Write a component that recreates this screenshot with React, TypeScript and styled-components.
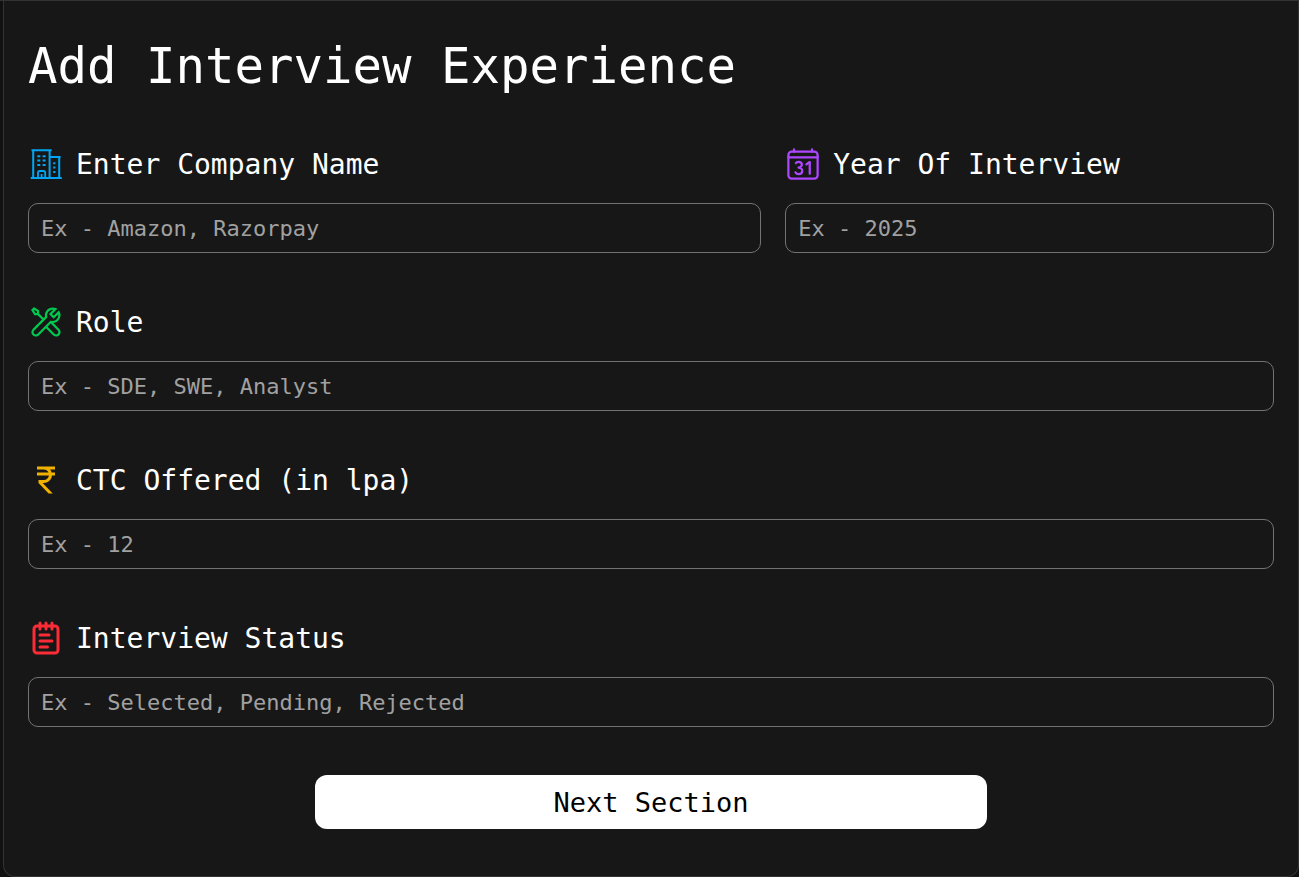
import React from "react";
import styled, { createGlobalStyle } from "styled-components";
import { IoCalendarNumberOutline } from "react-icons/io5";
import { LiaToolsSolid } from "react-icons/lia";
import { MdCurrencyRupee } from "react-icons/md";
import { LuNotepadText } from "react-icons/lu";

const GlobalStyle = createGlobalStyle`
  *, *::before, *::after { box-sizing: border-box; }
  body {
    margin: 0;
    background: #111111;
    color: #ffffff;
    font-family: Consolas, "DejaVu Sans Mono", monospace;
  }
`;

const Page = styled.main`
  border-top: 1px solid #333333;
  padding-left: 3px;
`;

const Card = styled.form`
  padding: 24px 24px 47px;
  background: #171717;
  border: 1px solid #333333;
  border-top: 0;
  border-radius: 0 0 12px 12px;
`;

const Title = styled.h1`
  margin: 0 0 36px;
  font-size: 49px;
  line-height: 84px;
  font-weight: 400;
`;

const Fields = styled.div`
  display: grid;
  grid-template-columns: 3fr 2fr;
  column-gap: 24px;
  row-gap: 50px;
`;

const Field = styled.div<{ $wide?: boolean }>`
  display: flex;
  flex-direction: column;
  gap: 20px;
  min-width: 0;
  grid-column: ${(p) => (p.$wide ? "1 / -1" : "auto")};
`;

const Label = styled.label<{ $tint: string }>`
  display: flex;
  align-items: center;
  gap: 12px;
  font-size: 28px;

  svg {
    flex: none;
    width: 36px;
    height: 36px;
    color: ${(p) => p.$tint};
  }
`;

const LabelText = styled.span`
  padding-top: 2px;
  line-height: 36px;
`;

const TextInput = styled.input`
  width: 100%;
  height: 50px;
  padding: 0 12px;
  border: 1px solid #737373;
  border-radius: 10px;
  background: transparent;
  color: inherit;
  font: inherit;
  font-size: 22px;

  &::placeholder { color: #a1a1a1; opacity: 1; }
`;

const NextButton = styled.button`
  display: block;
  width: 100%;
  max-width: 672px;
  height: 54px;
  margin: 48px auto 0;
  border: 0;
  border-radius: 12px;
  background: #ffffff;
  color: #000000;
  font: inherit;
  font-size: 27px;
  cursor: pointer;
`;

function OfficeIcon() {
  return (
    <svg viewBox="0 0 36 36" fill="none" stroke="currentColor" strokeWidth="2" aria-hidden>
      <path d="M3.5 4.2H23.6M5.2 4.2V32M21.6 4.2V32M21.6 11H32.6M31.2 11V32M2.7 32H33.8" />
      <path d="M10 32V26.8Q10 25 11.8 25H15.4Q17.2 25 17.2 26.8V32M13.6 28V32" strokeWidth="1.8" />
      <path d="M9.3 10.2h3M14.6 10.2h3M9.3 14.6h3M14.6 14.6h3M9.3 19h3M14.6 19h3M25.2 17.2h2.2M25.2 21.6h2.2M25.2 26h2.2" />
    </svg>
  );
}

const fields = [
  { id: "company", label: "Enter Company Name", hint: "Ex - Amazon, Razorpay", tint: "#00a6f4", Icon: OfficeIcon },
  { id: "year", label: "Year Of Interview", hint: "Ex - 2025", tint: "#ad46ff", Icon: IoCalendarNumberOutline },
  { id: "role", label: "Role", hint: "Ex - SDE, SWE, Analyst", tint: "#00c950", Icon: LiaToolsSolid, wide: true },
  { id: "ctc", label: "CTC Offered (in lpa)", hint: "Ex - 12", tint: "#f0b100", Icon: MdCurrencyRupee, wide: true },
  { id: "status", label: "Interview Status", hint: "Ex - Selected, Pending, Rejected", tint: "#fb2c36", Icon: LuNotepadText, wide: true },
];

export default function App() {
  return (
    <Page>
      <GlobalStyle />
      <Card onSubmit={(e) => e.preventDefault()}>
        <Title>Add Interview Experience</Title>
        <Fields>
          {fields.map(({ id, label, hint, tint, Icon, wide }) => (
            <Field key={id} $wide={wide}>
              <Label htmlFor={id} $tint={tint}>
                <Icon />
                <LabelText>{label}</LabelText>
              </Label>
              <TextInput id={id} name={id} type="text" placeholder={hint} />
            </Field>
          ))}
        </Fields>
        <NextButton type="submit">Next Section</NextButton>
      </Card>
    </Page>
  );
}
